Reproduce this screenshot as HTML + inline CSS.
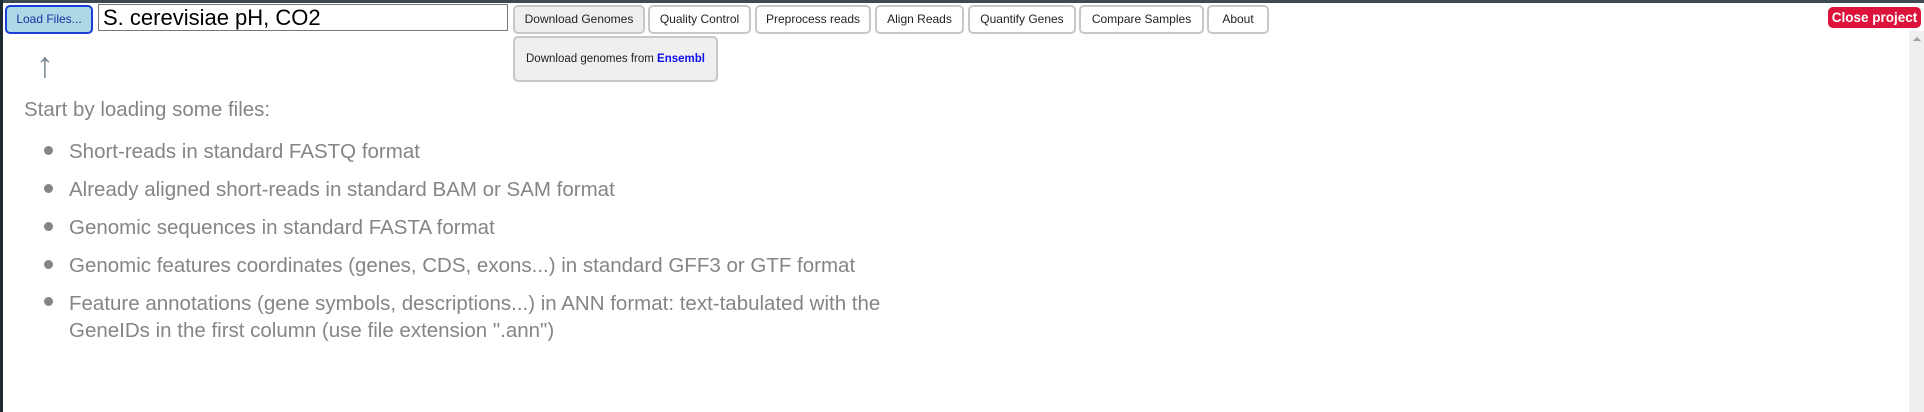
<!DOCTYPE html>
<html><head><style>
body{margin:0;width:1924px;height:412px;overflow:hidden;background:#fff;font-family:"Liberation Sans",Arial,sans-serif;position:relative}
.a{position:absolute;box-sizing:border-box}
.btn{position:absolute;box-sizing:border-box;background:#fff;border:2px solid #c8c8c8;border-radius:5px;font-size:12px;color:#222;text-align:center;line-height:24px;height:29px;top:5px;white-space:nowrap}
.t{position:absolute;color:#858585;font-size:20.5px;white-space:nowrap}
.dot{position:absolute;left:44px;width:9px;height:9px;border-radius:50%;background:#858585}
</style></head><body>
<div class="a" style="left:0;top:0;width:1924px;height:3px;background:#3e4a52"></div>
<div class="a" style="left:0;top:0;width:3px;height:412px;background:#1e2a33"></div>
<div class="a" style="left:1909px;top:31px;width:15px;height:381px;background:#efefef"></div>
<div class="a" style="left:1913px;top:37px;width:0;height:0;border-left:4px solid transparent;border-right:4px solid transparent;border-bottom:4px solid #a0a0a0"></div>
<div class="btn" style="left:5px;width:88px;background:#add8e6;border-color:#1a3fd8;color:#1a2fa0;">Load Files...</div>
<div class="a" style="left:98px;top:4px;width:410px;height:27px;border:1px solid #777;font-size:22px;line-height:25px;padding-left:4px;color:#000">S. cerevisiae pH, CO2</div>
<div class="btn" style="left:513px;width:132px;background:#efefef">Download Genomes</div>
<div class="btn" style="left:648px;width:103px">Quality Control</div>
<div class="btn" style="left:755px;width:116px">Preprocess reads</div>
<div class="btn" style="left:875px;width:89px">Align Reads</div>
<div class="btn" style="left:968px;width:108px">Quantify Genes</div>
<div class="btn" style="left:1079px;width:125px">Compare Samples</div>
<div class="btn" style="left:1207px;width:62px">About</div>
<div class="a" style="left:513px;top:36px;width:205px;height:46px;background:#efefef;border:2px solid #c8c8c8;border-radius:5px;font-size:11.5px;line-height:42px;text-align:center;color:#222;white-space:nowrap">Download genomes from <b style="color:#1010ee">Ensembl</b></div>
<div class="a" style="left:1828px;top:7px;width:93px;height:21px;background:#dc143c;border-radius:5px;color:#fff;font-weight:bold;font-size:13.5px;line-height:21px;text-align:center;white-space:nowrap">Close project</div>
<div class="t" style="left:36px;top:44px;font-size:36px;color:#7a8a95">↑</div>
<div class="t" style="left:24px;top:98px">Start by loading some files:</div>
<div class="dot" style="top:146px"></div><div class="t" style="left:69px;top:140px">Short-reads in standard FASTQ format</div>
<div class="dot" style="top:184px"></div><div class="t" style="left:69px;top:178px">Already aligned short-reads in standard BAM or SAM format</div>
<div class="dot" style="top:222px"></div><div class="t" style="left:69px;top:216px">Genomic sequences in standard FASTA format</div>
<div class="dot" style="top:260px"></div><div class="t" style="left:69px;top:254px">Genomic features coordinates (genes, CDS, exons...) in standard GFF3 or GTF format</div>
<div class="dot" style="top:297px"></div><div class="t" style="left:69px;top:290px;line-height:27px">Feature annotations (gene symbols, descriptions...) in ANN format: text-tabulated with the<br>GeneIDs in the first column (use file extension ".ann")</div>
</body></html>
